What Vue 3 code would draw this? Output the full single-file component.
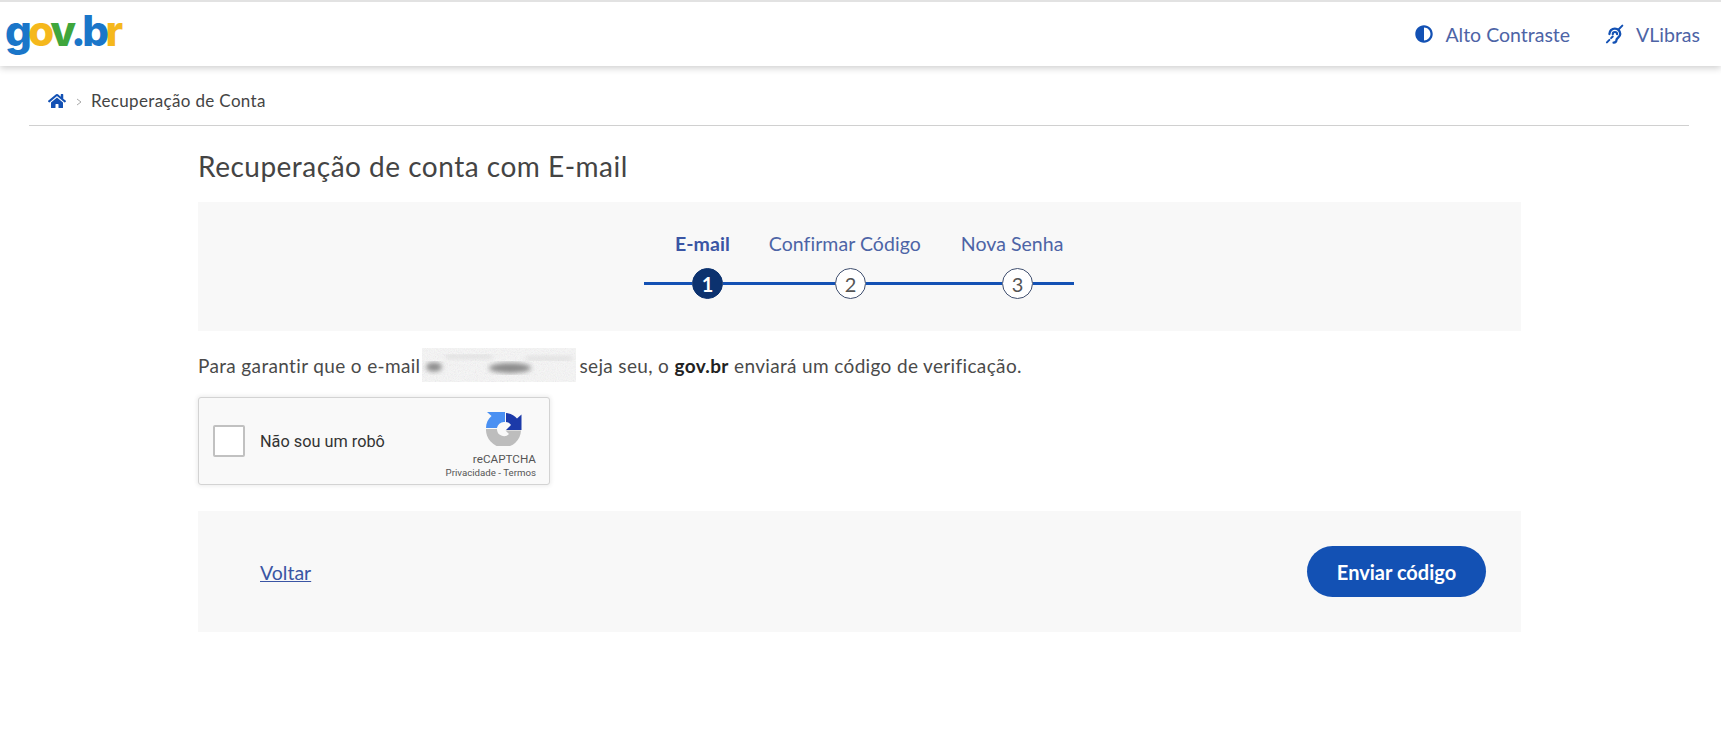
<script setup>
const steps = [
  { n: 1, label: 'E-mail', active: true },
  { n: 2, label: 'Confirmar Código' },
  { n: 3, label: 'Nova Senha' }
]
</script>

<template>
  <div class="page">
    <header class="topbar">
      <div class="logo"><span class="g">g</span><span class="o">o</span><span class="v">v</span><span class="dot">.</span><span class="b">b</span><span class="r">r</span></div>
      <nav class="tools">
        <a class="tool contrast">
          <svg width="18" height="18" viewBox="0 0 512 512"><path fill="#1351b4" d="M8 256c0 136.966 111.033 248 248 248s248-111.034 248-248S392.966 8 256 8 8 119.033 8 256zm248 184V72c101.705 0 184 82.311 184 184 0 101.705-82.311 184-184 184z"/></svg>
          <span>Alto Contraste</span>
        </a>
        <a class="tool libras">
          <svg width="20" height="20" viewBox="0 0 24 24" fill="none" stroke="#1351b4" stroke-linecap="round"><path stroke-width="2.800" d="M6.500 12a6.500 6.500 0 0 1 13 0c0 4.200-4.400 4-4.600 7.400a3.200 3.200 0 0 1-3.400 2.900"/><path stroke-width="2.600" d="M10.500 12.200a2.600 2.600 0 0 1 5.200 0"/><path stroke-width="2.400" d="M22 2l-4 4M10.500 15l-2 2M6.500 19l-3 3"/></svg>
          <span>VLibras</span>
        </a>
      </nav>
    </header>

    <div class="crumbs">
      <svg width="18" height="16" viewBox="0 0 576 512"><path fill="#1351b4" d="M280.37 148.26L96 300.11V464a16 16 0 0 0 16 16l112.06-.29a16 16 0 0 0 15.92-16V368a16 16 0 0 1 16-16h64a16 16 0 0 1 16 16v95.64a16 16 0 0 0 16 16.05L464 480a16 16 0 0 0 16-16V300L295.67 148.26a12.19 12.19 0 0 0-15.3 0zM571.6 251.47L488 182.56V44.05a12 12 0 0 0-12-12h-56a12 12 0 0 0-12 12v72.61L318.47 43a48 48 0 0 0-61 0L4.34 251.47a12 12 0 0 0-1.6 16.9l25.5 31A12 12 0 0 0 45.15 301l235.22-193.74a12.19 12.19 0 0 1 15.3 0L530.9 301a12 12 0 0 0 16.9-1.6l25.5-31a12 12 0 0 0-1.7-16.93z"/></svg>
      <svg class="sep" width="6" height="8" viewBox="0 0 6 8" fill="none" stroke="#aaa"><path d="M1 1l4 3-4 3"/></svg>
      <span>Recuperação de Conta</span>
    </div>

    <main class="content">
      <h1>Recuperação de conta com E-mail</h1>

      <section class="panel stepper">
        <div class="labels">
          <span v-for="s in steps" :key="s.n" class="label" :class="{ on: s.active }">{{ s.label }}</span>
        </div>
        <div class="track">
          <i class="seg s0"></i>
          <b class="node on">1</b>
          <i class="seg s1"></i>
          <b class="node">2</b>
          <i class="seg s2"></i>
          <b class="node">3</b>
          <i class="seg s3"></i>
        </div>
      </section>

      <p class="lead">
        <span>Para garantir que o e-mail</span>
        <span class="redact" aria-hidden="true">
          <svg width="154" height="34" viewBox="0 0 154 34">
            <defs>
              <filter id="nz"><feTurbulence type="fractalNoise" baseFrequency="0.9" numOctaves="2" seed="4"/><feColorMatrix type="saturate" values="0.5"/><feComponentTransfer><feFuncA type="linear" slope="0.7"/></feComponentTransfer></filter>
              <filter id="bl"><feGaussianBlur stdDeviation="2.400"/></filter>
            </defs>
            <rect width="154" height="34" fill="#f8f8f8"/>
            <rect width="154" height="34" filter="url(#nz)" opacity=".3"/>
            <g filter="url(#bl)" fill="#8a8a8a">
              <ellipse cx="12" cy="19" rx="8" ry="4.500"/>
              <ellipse cx="88" cy="20" rx="21" ry="5"/>
            </g>
            <g filter="url(#bl)" fill="#d6d6d6">
              <rect x="24" y="7" width="46" height="3"/>
              <rect x="104" y="9" width="46" height="3"/>
            </g>
          </svg>
        </span>
        <span>seja seu, o <strong>gov.br</strong> enviará um código de verificação.</span>
      </p>

      <div class="captcha">
        <span class="box"></span>
        <span class="robot">Não sou um robô</span>
        <div class="brand">
          <svg width="36" height="34" viewBox="0 0 36 34">
            <path fill="#bdbdbd" d="M0 17H11A7 7 0 0 0 23 22L19.500 18.500H35A17 17 0 0 1 0 17Z"/>
            <path fill="#4a90f2" d="M0 16C0 11 2 7 5.500 4L1 0H19V10H18A7 7 0 0 0 11 16Z"/>
            <path fill="#1c3aa9" d="M20 1C24.500 1.500 28.500 3.500 31 6.500L35.500 2.500V18H20L25 13C24 11.500 22 10 20 10Z"/>
          </svg>
          <span class="rc">reCAPTCHA</span>
          <span class="terms">Privacidade - Termos</span>
        </div>
      </div>

      <section class="panel actions">
        <a class="back">Voltar</a>
        <button class="send" type="button">Enviar código</button>
      </section>
    </main>
  </div>
</template>

<style>
html, body { margin: 0; background: #fff; }
</style>

<style scoped>
.page {
  height: 733px;
  overflow: hidden;
  font-family: Lato, "Open Sans", sans-serif;
  color: #333;
}
.topbar {
  height: 64px;
  border-top: 2px solid #e2e2e2;
  display: flex;
  align-items: center;
  justify-content: space-between;
  padding: 0 21px 0 5px;
  box-shadow: 0 2px 7px rgba(0, 0, 0, .2);
  background: #fff;
}
.logo {
  font-family: Inter, sans-serif;
  font-weight: 800;
  font-size: 42px;
  letter-spacing: -3.500px;
  line-height: 1;
  margin-top: -6px;
}
.g { color: #1a76c9; }
.o { color: #f5b81c; }
.v { color: #3fa63c; }
.dot { color: #1a76c9; }
.b { color: #1a76c9; }
.r { color: #f5b81c; }
.tools { display: flex; gap: 34px; }
.tool {
  display: flex;
  align-items: center;
  gap: 12px;
  font-size: 19.500px;
  color: #4d64a6;
}
.crumbs {
  height: 49px;
  padding-top: 10px;
  margin: 0 32px 0 29px;
  padding-left: 19px;
  border-bottom: 1px solid #d0d0d0;
  display: flex;
  align-items: center;
  gap: 7px;
  font-size: 17px;
  letter-spacing: .35px;
  color: #444;
}
.sep { margin: 2px 2px 0 3px; }
.content { width: 1323px; margin-left: 198px; }
h1 {
  margin: 0;
  height: 76px;
  padding-top: 4px;
  box-sizing: border-box;
  display: flex;
  align-items: center;
  font-size: 28px;
  letter-spacing: .5px;
  font-weight: 400;
  color: #444;
}
.panel { background: #f8f8f8; }
.stepper {
  height: 129px;
  box-sizing: border-box;
  padding-top: 29px;
}
.labels {
  display: flex;
  padding-left: 477px;
  height: 24px;
  align-items: center;
  font-size: 19.500px;
  letter-spacing: .05px;
  color: #4d64a6;
}
.label:nth-child(2) { margin-left: 39px; }
.label:nth-child(3) { margin-left: 40px; }
.label.on { font-weight: 700; color: #3a55a4; }
.track {
  display: flex;
  align-items: center;
  margin-top: 13px;
  padding-left: 446px;
}
.seg { height: 3px; background: #1351b4; display: block; }
.s0 { width: 48px; }
.s1 { width: 112px; }
.s2 { width: 136px; }
.s3 { width: 41px; }
.node {
  width: 31px;
  height: 31px;
  box-sizing: border-box;
  border: 1.500px solid #3f4e6e;
  border-radius: 50%;
  display: flex;
  align-items: center;
  justify-content: center;
  font-weight: 400;
  font-size: 20px;
  color: #555;
  background: #fff;
}
.node.on {
  background: #0c326f;
  border-color: #0c326f;
  color: #fff;
  font-weight: 700;
}
.lead {
  margin: 17px 0 0;
  height: 34px;
  display: flex;
  align-items: center;
  font-size: 19px;
  letter-spacing: .35px;
  color: #4a4a4a;
}
.lead strong { color: #222; font-weight: 700; }
.redact { display: block; width: 154px; height: 34px; margin: 0 3px 0 2px; }
.captcha {
  margin-top: 15px;
  width: 352px;
  height: 88px;
  box-sizing: border-box;
  background: #f9f9f9;
  border: 1px solid #d3d3d3;
  border-radius: 3px;
  box-shadow: 0 0 4px 1px rgba(0, 0, 0, .08);
  display: flex;
  align-items: center;
  font-family: Roboto, sans-serif;
  padding: 0 13px 0 14px;
}
.box {
  width: 32px;
  height: 32px;
  box-sizing: border-box;
  background: #fff;
  border: 2px solid #c1c1c1;
  border-radius: 2px;
}
.robot { margin-left: 15px; font-size: 16.300px; color: #333; }
.brand {
  margin-left: auto;
  display: flex;
  flex-direction: column;
  align-items: flex-end;
  padding-top: 9px;
}
.brand svg { margin: 0 14px 6px 0; }
.rc { font-size: 11.700px; color: #555; line-height: 14px; }
.terms { font-size: 9.700px; color: #555; line-height: 14px; white-space: nowrap; }
.actions {
  margin-top: 26px;
  height: 121px;
  display: flex;
  align-items: center;
  justify-content: space-between;
  padding: 0 35px 0 62px;
}
.back {
  font-size: 19.500px;
  color: #3a55a4;
  text-decoration: underline;
  padding-top: 2px;
}
.send {
  width: 179px;
  height: 51px;
  border: 0;
  border-radius: 26px;
  background: #1351b4;
  color: #fff;
  font-family: Lato, sans-serif;
  font-size: 20px;
  font-weight: 700;
}
</style>
